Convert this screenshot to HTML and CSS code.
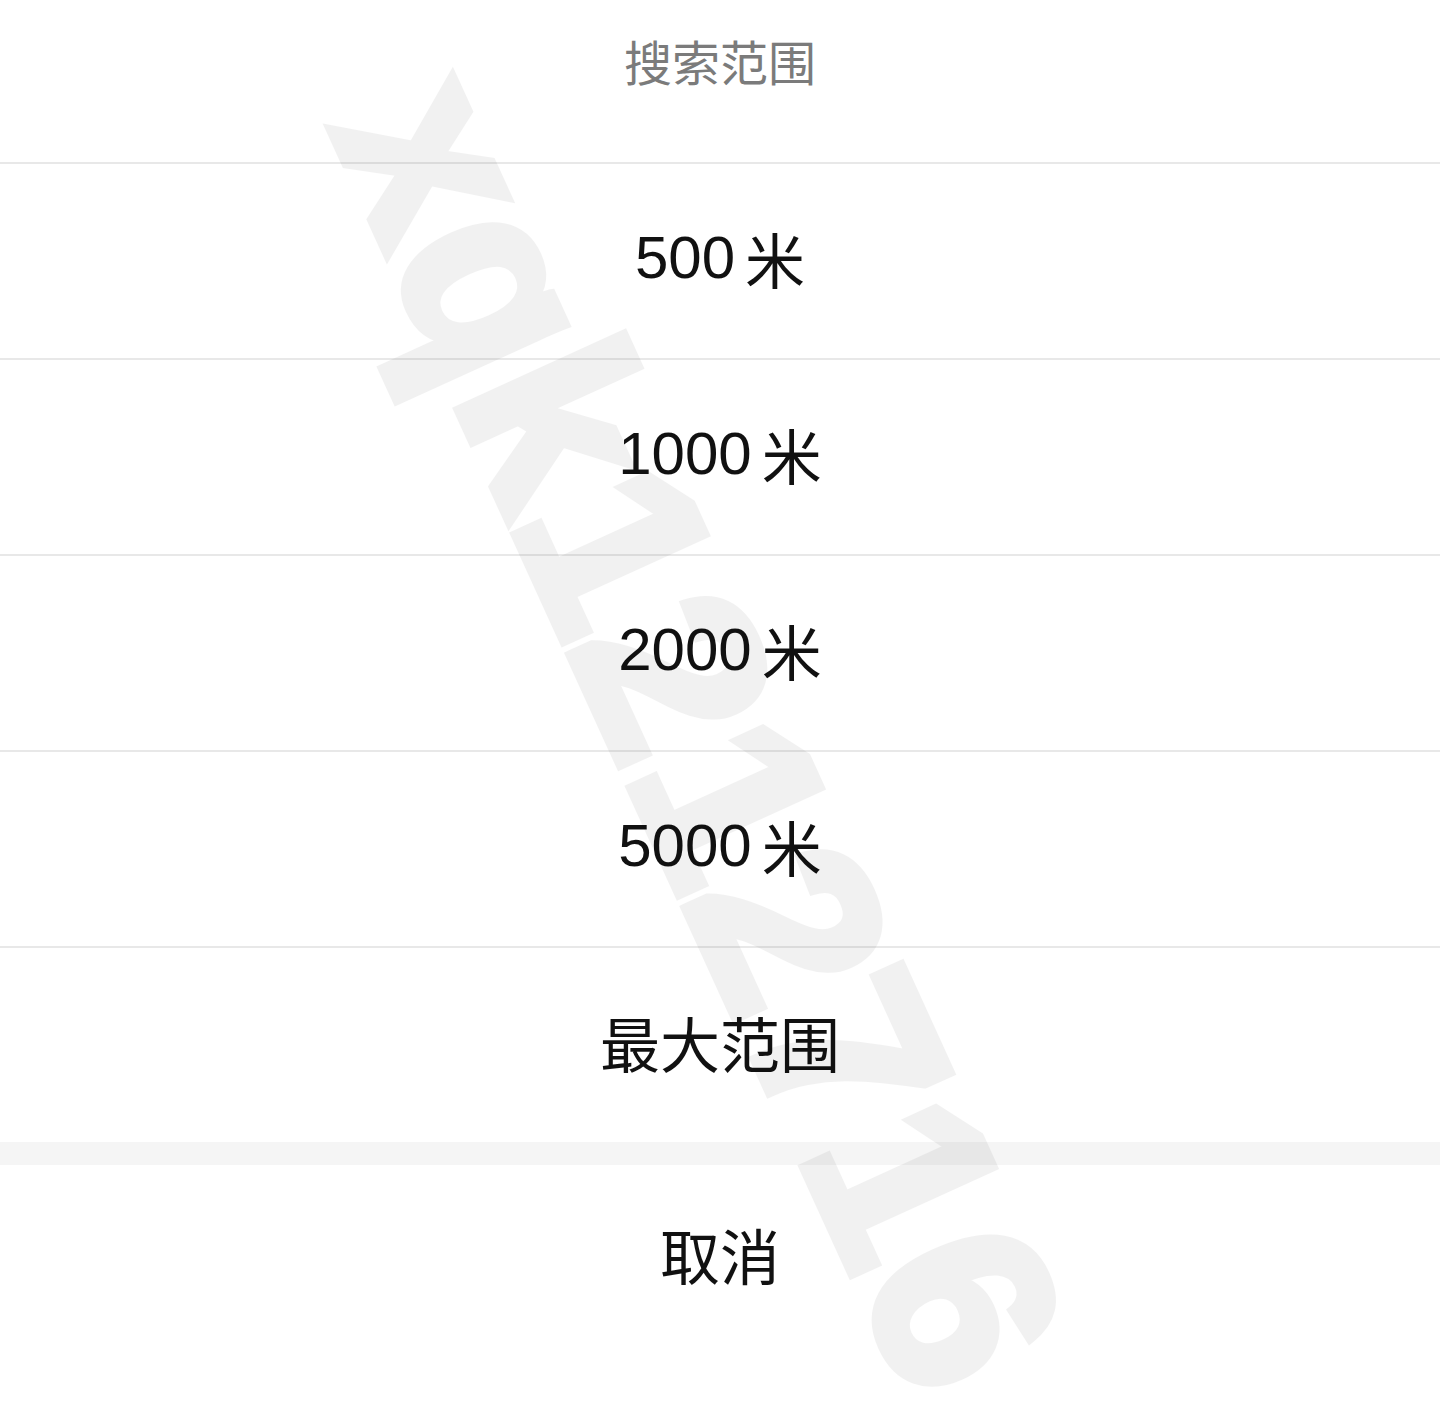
FILE: index.html
```html
<!DOCTYPE html>
<html>
<head>
    <meta charset="utf-8">
    <title>搜索范围</title>
    <link rel="stylesheet" href="styles.css">
</head>
<body>
    <div class="sheet">
        <div class="sheet-title">搜索范围</div>
        <div class="sheet-options">
            <div class="sheet-option">500<span class="unit">米</span></div>
            <div class="sheet-option">1000<span class="unit">米</span></div>
            <div class="sheet-option">2000<span class="unit">米</span></div>
            <div class="sheet-option">5000<span class="unit">米</span></div>
            <div class="sheet-option">最大范围</div>
        </div>
        <div class="sheet-gap"></div>
        <div class="sheet-cancel">取消</div>
    </div>
    <div class="watermark">xqk1212716</div>
</body>
</html>
```

FILE: styles.css
```css
html, body {
    margin: 0;
    padding: 0;
    background: #fff;
}
body {
    width: 1440px;
    height: 1417px;
    overflow: hidden;
    position: relative;
    font-family: 'Liberation Sans', 'Noto Sans CJK SC', sans-serif;
}
.sheet {
    display: flex;
    flex-direction: column;
}
.sheet-title {
    height: 162px;
    box-sizing: border-box;
    padding-top: 35px;
    text-align: center;
    font-size: 48px;
    line-height: 60px;
    color: #7b7b7b;
}
.sheet-option {
    height: 196px;
    box-sizing: border-box;
    border-top: 2px solid #e8e8e8;
    padding-bottom: 8px;
    display: flex;
    align-items: center;
    justify-content: center;
    font-size: 60px;
    color: #111;
}
.unit {
    margin-left: 10px;
}
.sheet-gap {
    height: 23px;
    background: #f5f5f5;
}
.sheet-cancel {
    height: 184px;
    box-sizing: border-box;
    padding-bottom: 8px;
    display: flex;
    align-items: center;
    justify-content: center;
    font-size: 60px;
    color: #111;
}
/* diagonal account watermark over the whole sheet */
.watermark {
    position: absolute;
    left: 700px;
    top: 732px;
    transform: translate(-50%, -50%) rotate(65.5deg);
    font-family: 'Liberation Sans', sans-serif;
    font-weight: bold;
    font-size: 250px;
    line-height: 1;
    white-space: nowrap;
    color: #000;
    -webkit-text-stroke: 10px #000;
    opacity: 0.05;
    pointer-events: none;
}
```
